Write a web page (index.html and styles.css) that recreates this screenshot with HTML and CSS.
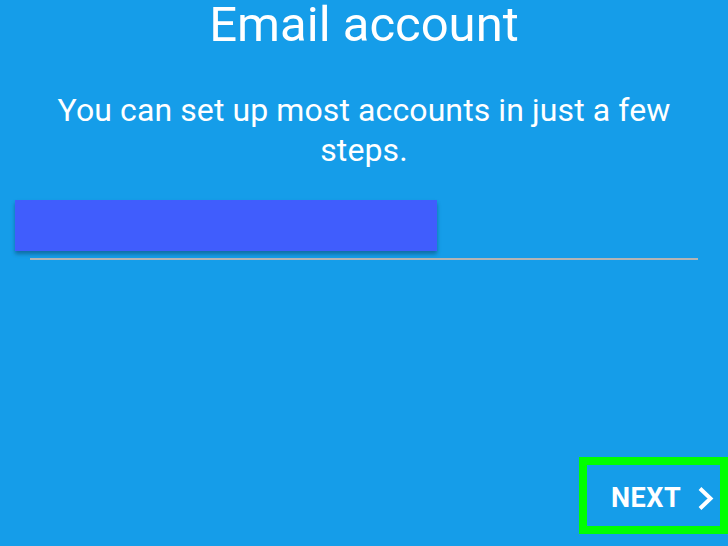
FILE: index.html
```html
<!DOCTYPE html>
<html lang="en">
<head>
    <meta charset="UTF-8">
    <meta name="viewport" content="width=device-width, initial-scale=1.0">
    <title>Email account</title>
    <link rel="stylesheet" href="styles.css">
</head>
<body>

<div class="screen">
    <header class="title">Email account</header>

    <p class="subtitle">You can set up most accounts in just a few steps.</p>

    <div class="field">
        <div class="field-box"></div>
        <div class="field-line"></div>
    </div>

    <div class="actions">
        <button class="next-btn">
            <span>NEXT</span>
            <svg class="chevron" width="17" height="25" viewBox="0 0 17 25">
                <path d="M3 2.5 L13.5 12.5 L3 22.5" fill="none" stroke="#fff" stroke-width="4"/>
            </svg>
        </button>
    </div>
</div>

</body>
</html>
```

FILE: styles.css
```css
body {
    margin: 0;
    padding: 0;
    font-family: Roboto, 'Noto Sans', sans-serif;
    background-color: #159de9;
    color: #fff;
    overflow: hidden;
}

.screen {
    height: 546px;
    display: flex;
    flex-direction: column;
}

.title {
    text-align: center;
    font-size: 49px;
    line-height: 48px;
    padding-top: 1px;
    font-weight: 400;
}

.subtitle {
    text-align: center;
    font-size: 32px;
    letter-spacing: 0.1px;
    line-height: 40px;
    margin: 41px 50px 0;
}

.field {
    margin-top: 30px;
}

.field-box {
    width: 422px;
    height: 51px;
    margin-left: 15px;
    background-color: #405dfd;
    box-shadow: 0 3px 4px rgba(0, 0, 0, 0.3);
}

.field-line {
    height: 2px;
    margin: 7px 30px 0;
    background-color: #b4b4b4;
}

.actions {
    margin-top: auto;
    display: flex;
    justify-content: flex-end;
    padding-bottom: 12px;
}

.next-btn {
    width: 149px;
    height: 77px;
    box-sizing: border-box;
    border: 8px solid #00ff00;
    background: transparent;
    color: #fff;
    font-family: Roboto, sans-serif;
    font-size: 27px;
    letter-spacing: 0.5px;
    font-weight: 700;
    display: flex;
    align-items: center;
    gap: 16px;
    padding: 5px 0 0 24px;
}

.chevron {
    display: block;
}
```
